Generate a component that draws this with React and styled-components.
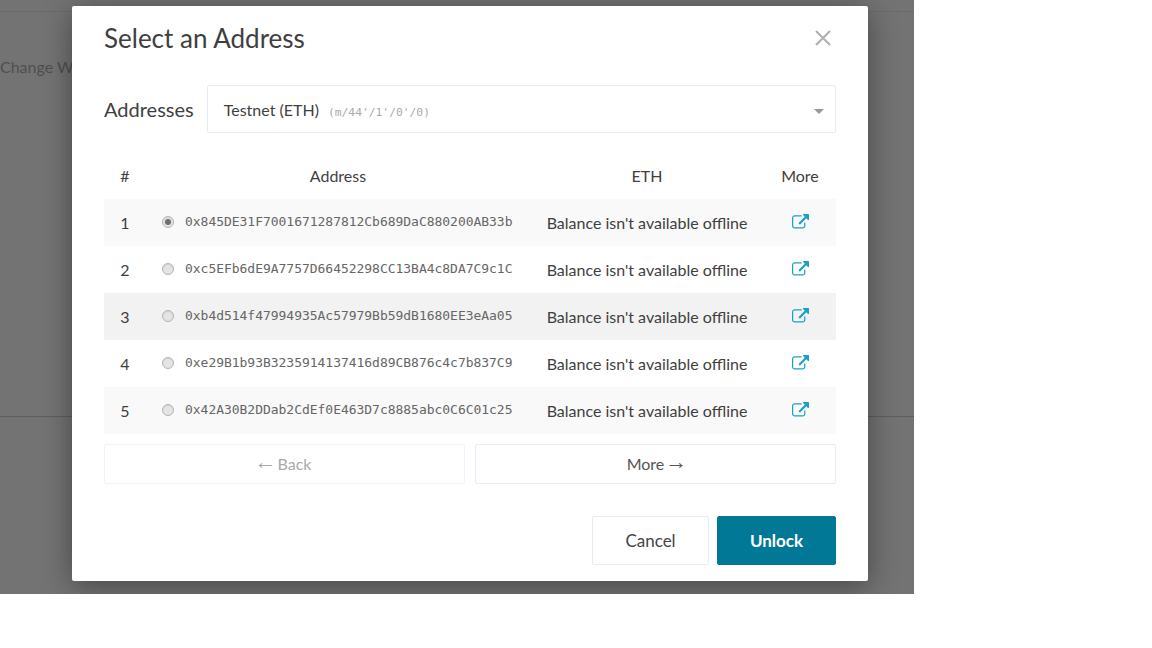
import React from 'react';
import styled, { createGlobalStyle } from 'styled-components';

const GlobalStyle = createGlobalStyle`
  html, body { margin: 0; padding: 0; background: #fff; }
  * { box-sizing: border-box; }
  body { font-family: Lato, "Open Sans", sans-serif; color: #3f3f3f; }
`;

const accounts = [
  { address: '0x845DE31F7001671287812Cb689DaC880200AB33b', checked: true },
  { address: '0xc5EFb6dE9A7757D66452298CC13BA4c8DA7C9c1C', tone: 'plain' },
  { address: '0xb4d514f47994935Ac57979Bb59dB1680EE3eAa05', tone: 'hover' },
  { address: '0xe29B1b93B3235914137416d89CB876c4c7b837C9', tone: 'plain' },
  { address: '0x42A30B2DDab2CdEf0E463D7c8885abc0C6C01c25' },
];

const rowTones = { plain: '#fff', hover: '#f2f2f2' };

function LinkIcon() {
  return (
    <LinkSvg viewBox="0 0 1792 1792" aria-hidden="true">
      <path d="M1408 928v320q0 119-84.5 203.5t-203.5 84.5h-832q-119 0-203.5-84.5t-84.5-203.5v-832q0-119 84.5-203.5t203.5-84.5h704q14 0 23 9t9 23v64q0 14-9 23t-23 9h-704q-66 0-113 47t-47 113v832q0 66 47 113t113 47h832q66 0 113-47t47-113v-320q0-14 9-23t23-9h64q14 0 23 9t9 23zm384-864v512q0 26-19 45t-45 19-45-19l-176-176-652 652q-10 10-23 10t-23-10l-114-114q-10-10-10-23t10-23l652-652-176-176q-19-19-19-45t19-45 45-19h512q26 0 45 19t19 45z" />
    </LinkSvg>
  );
}

export default function App() {
  return (
    <Page>
      <GlobalStyle />
      <TopBar />
      <ChangeWallet>Change Wallet</ChangeWallet>
      <FooterRule />
      <Overlay />
      <Modal>
        <Header>
          <Title>Select an Address</Title>
          <Close aria-label="Close">
            <svg width="18" height="18" viewBox="0 0 18 18" fill="none" stroke="#b0b0b0" strokeWidth="2">
              <path d="M2 2l14 14M16 2L2 16" />
            </svg>
          </Close>
        </Header>
        <SelectRow>
          <SelectLabel>Addresses</SelectLabel>
          <SelectBox>
            <span>Testnet (ETH)</span>
            <Path>(m/44'/1'/0'/0)</Path>
            <Caret />
          </SelectBox>
        </SelectRow>
        <HeadRow>
          <span>#</span>
          <span>Address</span>
          <span>ETH</span>
          <span>More</span>
        </HeadRow>
        {accounts.map((a, i) => (
          <Row key={a.address} $tone={a.tone}>
            <Num>{i + 1}</Num>
            <AddressCell>
              <Radio $checked={a.checked} />
              <Mono>{a.address}</Mono>
            </AddressCell>
            <Balance>Balance isn't available offline</Balance>
            <LinkCell><LinkIcon /></LinkCell>
          </Row>
        ))}
        <Pager>
          <PageBtn disabled><Arrow $side="left">←</Arrow> Back</PageBtn>
          <PageBtn>More <Arrow $side="right">→</Arrow></PageBtn>
        </Pager>
        <Footer>
          <CancelBtn>Cancel</CancelBtn>
          <UnlockBtn>Unlock</UnlockBtn>
        </Footer>
      </Modal>
    </Page>
  );
}

const Page = styled.div`
  position: relative;
  width: 914px;
  height: 594px;
  overflow: hidden;
  background: #fff;
`;

const TopBar = styled.div`
  height: 12px;
  border-bottom: 1px solid #ededed;
`;

const ChangeWallet = styled.div`
  margin-top: 45px;
  font-size: 16px;
  line-height: 20px;
  color: #b0b0b0;
`;

const FooterRule = styled.div`
  margin-top: 339px;
  height: 1px;
  background: #d0d0d0;
`;

const Overlay = styled.div`
  position: absolute;
  inset: 0;
  background: rgba(0, 0, 0, 0.55);
`;

const Modal = styled.div`
  position: absolute;
  left: 72px;
  top: 6px;
  width: 796px;
  height: 575px;
  padding: 0 32px;
  background: #fff;
  border-radius: 2px;
  box-shadow: 0 5px 30px rgba(0, 0, 0, 0.4);
`;

const Header = styled.div`
  display: flex;
  align-items: center;
  justify-content: space-between;
  height: 64px;
`;

const Title = styled.h2`
  margin: 0;
  font-size: 26px;
  font-weight: 400;
  color: #3f3f3f;
`;

const Close = styled.div`
  display: flex;
  margin-right: 4px;
`;

const SelectRow = styled.div`
  display: flex;
  align-items: center;
  gap: 13px;
  margin-top: 15px;
`;

const SelectLabel = styled.div`
  font-size: 20px;
`;

const SelectBox = styled.div`
  position: relative;
  display: flex;
  align-items: center;
  flex: 1;
  height: 48px;
  padding: 0 16px;
  font-size: 16px;
  border: 1px solid #e5ecf3;
  border-radius: 2px;
`;

const Path = styled.small`
  margin-left: 9px;
  margin-top: 7px;
  font-family: "DejaVu Sans Mono", "Liberation Mono", monospace;
  font-size: 11.3px;
  color: #aaa;
`;

const Caret = styled.span`
  position: absolute;
  right: 11px;
  top: 23px;
  border-left: 5px solid transparent;
  border-right: 5px solid transparent;
  border-top: 5px solid #999;
`;

const columns = '42px 384px 234px 72px';

const HeadRow = styled.div`
  display: grid;
  grid-template-columns: ${columns};
  align-items: center;
  justify-items: center;
  height: 66px;
  padding-top: 18px;
  font-size: 16px;
`;

const Row = styled.div`
  display: grid;
  grid-template-columns: ${columns};
  align-items: center;
  height: 47px;
  background: ${p => rowTones[p.$tone] || '#f9f9f9'};
`;

const Num = styled.div`
  text-align: center;
  font-size: 16px;
`;

const AddressCell = styled.div`
  display: flex;
  align-items: center;
  gap: 11px;
  padding-left: 16px;
  margin-top: -2px;
`;

const Radio = styled.span`
  position: relative;
  width: 12px;
  height: 12px;
  border-radius: 50%;
  border: 1px solid #b4b4b4;
  background: #e4e4e4;
  box-shadow: inset 0 1px 1px rgba(0, 0, 0, 0.08);

  ${p => p.$checked && `
    &::after {
      content: '';
      position: absolute;
      inset: 2px;
      border-radius: 50%;
      background: #6e6e6e;
    }
  `}
`;

const Mono = styled.span`
  font-family: "DejaVu Sans Mono", "Liberation Mono", monospace;
  font-size: 13px;
  letter-spacing: -0.03px;
  color: #666;
`;

const Balance = styled.div`
  text-align: center;
  font-size: 16px;
`;

const LinkCell = styled.div`
  display: flex;
  justify-content: center;
  margin-top: -1px;
`;

const LinkSvg = styled.svg`
  width: 17px;
  height: 17px;
  fill: #1a9fc6;
`;

const Pager = styled.div`
  display: flex;
  gap: 10px;
  margin-top: 10px;
`;

const PageBtn = styled.button`
  flex: 1;
  height: 40px;
  padding: 0 0 1px;
  font-family: inherit;
  font-size: 16px;
  word-spacing: -3px;
  color: ${p => (p.disabled ? '#aaa' : '#555')};
  background: #fff;
  border: 1px solid ${p => (p.disabled ? '#f0f3f7' : '#e5ecf3')};
  border-radius: 2px;
`;

const Arrow = styled.span`
  margin-${p => p.$side}: -3px;
  font-family: "Liberation Serif", serif;
  font-size: 22px;
  line-height: 0;
  vertical-align: 1px;
`;

const Footer = styled.div`
  display: flex;
  justify-content: flex-end;
  gap: 8px;
  margin-top: 32px;
`;

const CancelBtn = styled.button`
  width: 117px;
  height: 49px;
  padding: 0;
  font-family: inherit;
  font-size: 17px;
  color: #444;
  background: #fff;
  border: 1px solid #e5ecf3;
  border-radius: 2px;
`;

const UnlockBtn = styled.button`
  width: 119px;
  height: 49px;
  padding: 0;
  font-family: inherit;
  font-size: 17px;
  font-weight: 700;
  color: #fff;
  background: #007896;
  border: 1px solid #007896;
  border-radius: 2px;
`;
